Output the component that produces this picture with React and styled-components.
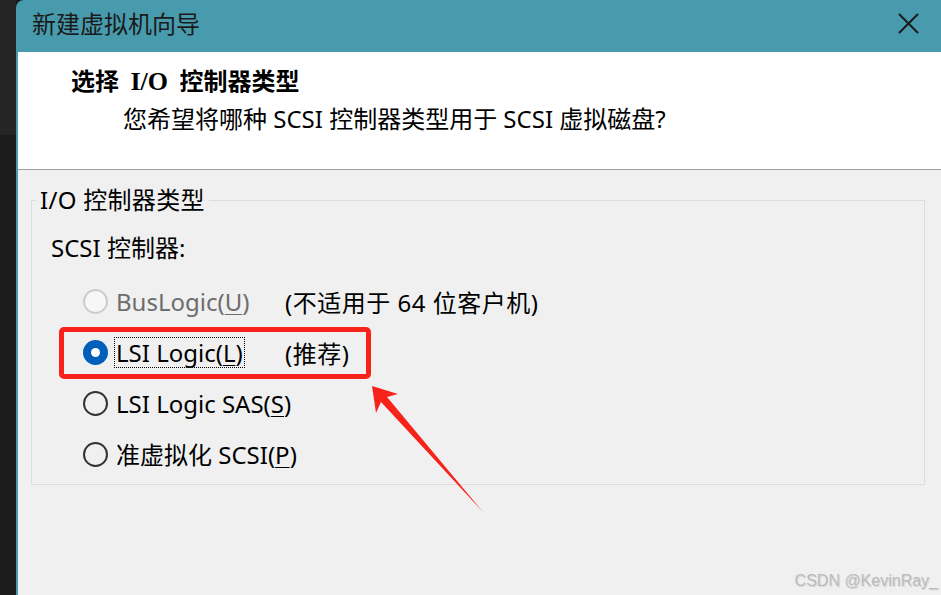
import styled, { createGlobalStyle } from "styled-components";

const GlobalStyle = createGlobalStyle`
  html, body {
    margin: 0;
    padding: 0;
    background: #1b1b1b;
  }
  body {
    font-family: "Noto Sans", "Noto Sans CJK SC", sans-serif;
  }
`;

const Page = styled.div`
  position: relative;
  display: flex;
  width: 941px;
  height: 595px;
  overflow: hidden;
`;

const Backdrop = styled.div`
  display: flex;
  flex-direction: column;
  width: 16px;
  flex-shrink: 0;

  > .top {
    height: 135px;
    background: #252525;
  }
  > .bottom {
    flex: 1;
    background: #1b1b1b;
  }
`;

const Window = styled.div`
  flex: 1;
  display: flex;
  flex-direction: column;
  background: #479bad;
  border-top-left-radius: 8px;
  padding-left: 2px;
`;

const TitleBar = styled.div`
  height: 52px;
  display: flex;
  align-items: center;
  justify-content: space-between;
  padding: 0 22px 0 14px;
  color: #1a1a1a;
  font-size: 24px;

  > .title {
    font-family: "Noto Sans CJK SC", sans-serif;
    line-height: 30px;
    margin-top: -6px;
  }
`;

const CloseIcon = () => (
  <svg width="21" height="21" viewBox="0 0 21 21" style={{ marginTop: "-6px" }}>
    <path d="M1 1 L20 20 M20 1 L1 20" stroke="#1a1a1a" strokeWidth="2" fill="none" />
  </svg>
);

const Header = styled.div`
  height: 118px;
  background: #ffffff;
  border-bottom: 1px solid #a0a0a0;
  padding: 13px 0 0 53px;
  box-sizing: border-box;
  color: #000;

  > h1 {
    margin: 0;
    font-size: 24px;
    line-height: 30px;
    font-weight: 700;
    word-spacing: 6px;
    font-family: "Noto Sans CJK SC", sans-serif;

    > .latin {
      font-family: "Liberation Serif", serif;
      font-size: 26px;
    }
  }

  > p {
    margin: 7px 0 0 52px;
    font-size: 24px;
    line-height: 30px;
  }
`;

const Body = styled.div`
  flex: 1;
  background: #f0f0f0;
  padding: 30px 16px 0 13px;
`;

const GroupBox = styled.div`
  border: 1px solid #dcdcdc;
  padding: 0 0 4px 19px;
`;

const Legend = styled.div`
  width: fit-content;
  margin: -16px 0 0 -15px;
  padding: 0 4px;
  background: #f0f0f0;
  font-size: 24px;
  line-height: 30px;
  letter-spacing: 0.3px;
  color: #000;
`;

const GroupLabel = styled.div`
  margin-top: 18px;
  font-size: 24px;
  line-height: 30px;
  color: #000;
`;

const Options = styled.div`
  margin-top: 13px;
  display: flex;
  flex-direction: column;
`;

const Row = styled.div`
  height: 51px;
  display: grid;
  grid-template-columns: 25px 165px auto;
  column-gap: 6px;
  align-items: center;
  padding-left: 32px;
  font-size: 24px;
  color: ${({ disabled }) => (disabled ? "#6d6d6d" : "#000")};
`;

const Radio = styled.span`
  width: 25px;
  height: 25px;
  box-sizing: border-box;
  border-radius: 50%;
  border: 2px solid ${({ disabled }) => (disabled ? "#cccccc" : "#333333")};
  background: ${({ disabled }) => (disabled ? "#f7f7f7" : "transparent")};
  display: flex;
  align-items: center;
  justify-content: center;

  ${({ checked }) =>
    checked &&
    `
    border: none;
    background: #005fb8;
    &::after {
      content: "";
      width: 9px;
      height: 9px;
      border-radius: 50%;
      background: #ffffff;
    }
  `}
`;

const OptionText = styled.span`
  justify-self: start;
  line-height: 29px;
  padding: 0 1px;
  border: 1px dotted ${({ focused }) => (focused ? "#000" : "transparent")};
  white-space: nowrap;

  > u {
    text-underline-offset: 3px;
    text-decoration-thickness: 1px;
  }
`;

const Note = styled.span`
  color: #000;
  white-space: nowrap;
  letter-spacing: 0.5px;
`;

const Highlight = styled.div`
  position: absolute;
  left: 59px;
  top: 327px;
  width: 312px;
  height: 52px;
  box-sizing: border-box;
  border: 5px solid #f7231b;
  border-radius: 5px;
  pointer-events: none;
`;

const Arrow = styled.svg`
  position: absolute;
  left: 0;
  top: 0;
  pointer-events: none;
`;

const Watermark = styled.div`
  position: absolute;
  right: 3px;
  bottom: 5px;
  font-family: "Liberation Sans", "Noto Sans", sans-serif;
  font-size: 16px;
  color: #bcbcbc;
  text-shadow: 1px 1px 1px rgba(0, 0, 0, 0.12);
`;

const options = [
  { label: "BusLogic(", key: "U", disabled: true, note: "(不适用于 64 位客户机)" },
  { label: "LSI Logic(", key: "L", checked: true, focused: true, note: "(推荐)" },
  { label: "LSI Logic SAS(", key: "S" },
  { label: "准虚拟化 SCSI(", key: "P" },
];

export default function App() {
  return (
    <>
      <GlobalStyle />
      <Page>
        <Backdrop>
          <div className="top" />
          <div className="bottom" />
        </Backdrop>
        <Window>
          <TitleBar>
            <span className="title">新建虚拟机向导</span>
            <CloseIcon />
          </TitleBar>
          <Header>
            <h1>
              选择 <span className="latin">I/O</span> 控制器类型
            </h1>
            <p>您希望将哪种 SCSI 控制器类型用于 SCSI 虚拟磁盘?</p>
          </Header>
          <Body>
            <GroupBox>
              <Legend>I/O 控制器类型</Legend>
              <GroupLabel>SCSI 控制器:</GroupLabel>
              <Options>
                {options.map((o) => (
                  <Row key={o.key} disabled={o.disabled}>
                    <Radio checked={o.checked} disabled={o.disabled} />
                    <OptionText focused={o.focused}>
                      {o.label}
                      <u>{o.key}</u>)
                    </OptionText>
                    {o.note ? <Note>{o.note}</Note> : <span />}
                  </Row>
                ))}
              </Options>
            </GroupBox>
          </Body>
        </Window>
        <Highlight />
        <Arrow width="941" height="595" viewBox="0 0 941 595">
          <polygon
            points="372,386 398,394 387,397 483,512 381,402 376,413"
            fill="#f7231b"
          />
        </Arrow>
        <Watermark>CSDN @KevinRay_</Watermark>
      </Page>
    </>
  );
}
